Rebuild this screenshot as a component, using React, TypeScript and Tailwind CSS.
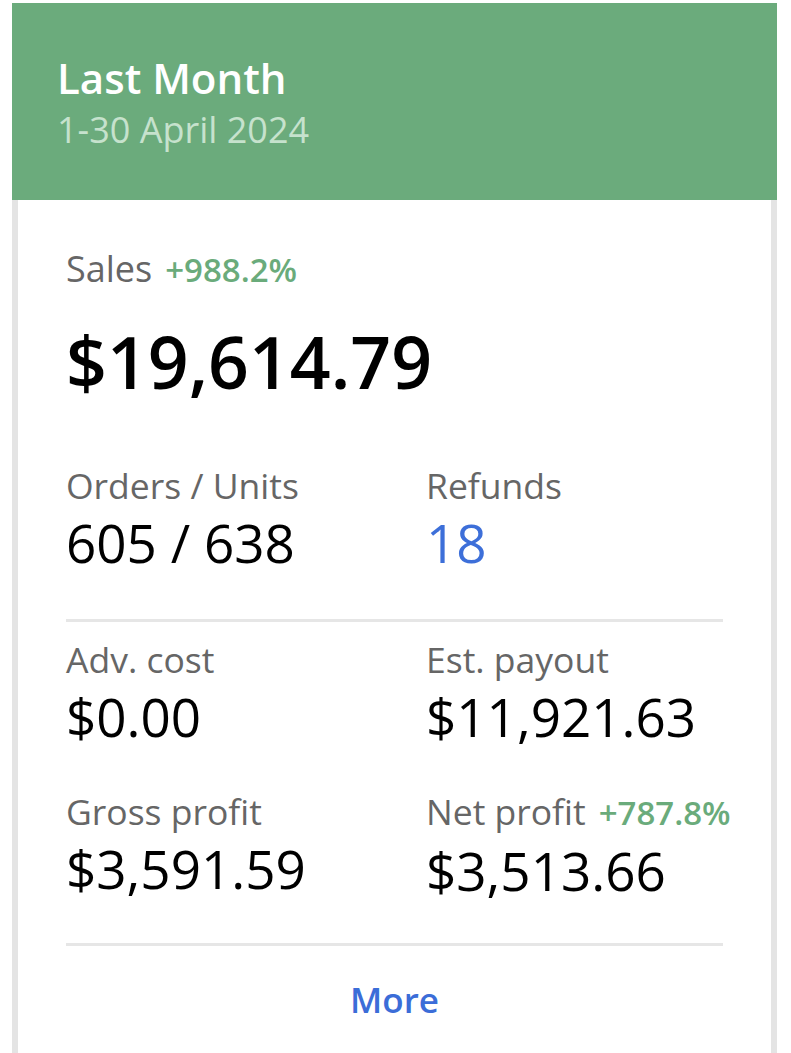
import React from "react";

type Stat = {
  label: string;
  value: string;
  change?: string;
  valueClass?: string;
};

const topStats: Stat[] = [
  { label: "Orders / Units", value: "605 / 638" },
  { label: "Refunds", value: "18", valueClass: "text-[#3d6fd9]" },
];

const bottomStats: Stat[] = [
  { label: "Adv. cost", value: "$0.00" },
  { label: "Est. payout", value: "$11,921.63" },
  { label: "Gross profit", value: "$3,591.59" },
  { label: "Net profit", value: "$3,513.66", change: "+787.8%" },
];

function StatCell({ stat }: { stat: Stat }) {
  return (
    <div className="whitespace-nowrap">
      <div className="flex items-baseline gap-[13px] text-[35.5px] leading-[42px] text-[#666666]">
        <span>{stat.label}</span>
        {stat.change ? (
          <span className="text-[33px] font-semibold text-[#6aab7b]">{stat.change}</span>
        ) : null}
      </div>
      <div className={`mt-[6px] text-[53px] leading-[62px] ${stat.valueClass ?? "text-black"}`}>
        {stat.value}
      </div>
    </div>
  );
}

export default function App() {
  return (
    <div className="min-h-screen bg-white pt-[3px] font-['Open_Sans',sans-serif]">
      <div className="ml-[12px] w-[765px]">
        {/* шапка периода */}
        <div className="h-[197px] bg-[#6bab7c] pl-[45px] pt-[51px]">
          <div className="text-[42px] font-semibold leading-[48px] text-white">Last Month</div>
          <div className="mt-[7px] text-[36px] leading-[42px] text-[#c6e2cd]">1-30 April 2024</div>
        </div>

        <div className="border-x-[6px] border-[#e4e4e4] bg-white px-[48px] pt-[48px] pb-[40px]">
          <div className="flex items-baseline gap-[13px] text-[36px] leading-[42px] text-[#666666]">
            <span>Sales</span>
            <span className="text-[33px] font-semibold text-[#6aab7b]">+988.2%</span>
          </div>
          <div className="mt-[31px] text-[71.5px] font-semibold leading-[80px] text-black">
            $19,614.79
          </div>

          <div className="mt-[62px] grid grid-cols-[360px_1fr]">
            {topStats.map((stat) => (
              <StatCell key={stat.label} stat={stat} />
            ))}
          </div>

          <div className="mt-[45px] h-[3px] bg-[#e6e6e6]" />

          <div className="mt-[16px] grid grid-cols-[360px_1fr] gap-y-[42px]">
            {bottomStats.map((stat) => (
              <StatCell key={stat.label} stat={stat} />
            ))}
          </div>

          <div className="mt-[41px] h-[3px] bg-[#e6e6e6]" />

          <div className="mt-[33px] text-center text-[35px] font-semibold leading-[42px] text-[#3b6dd8]">
            More
          </div>
        </div>
      </div>
    </div>
  );
}
